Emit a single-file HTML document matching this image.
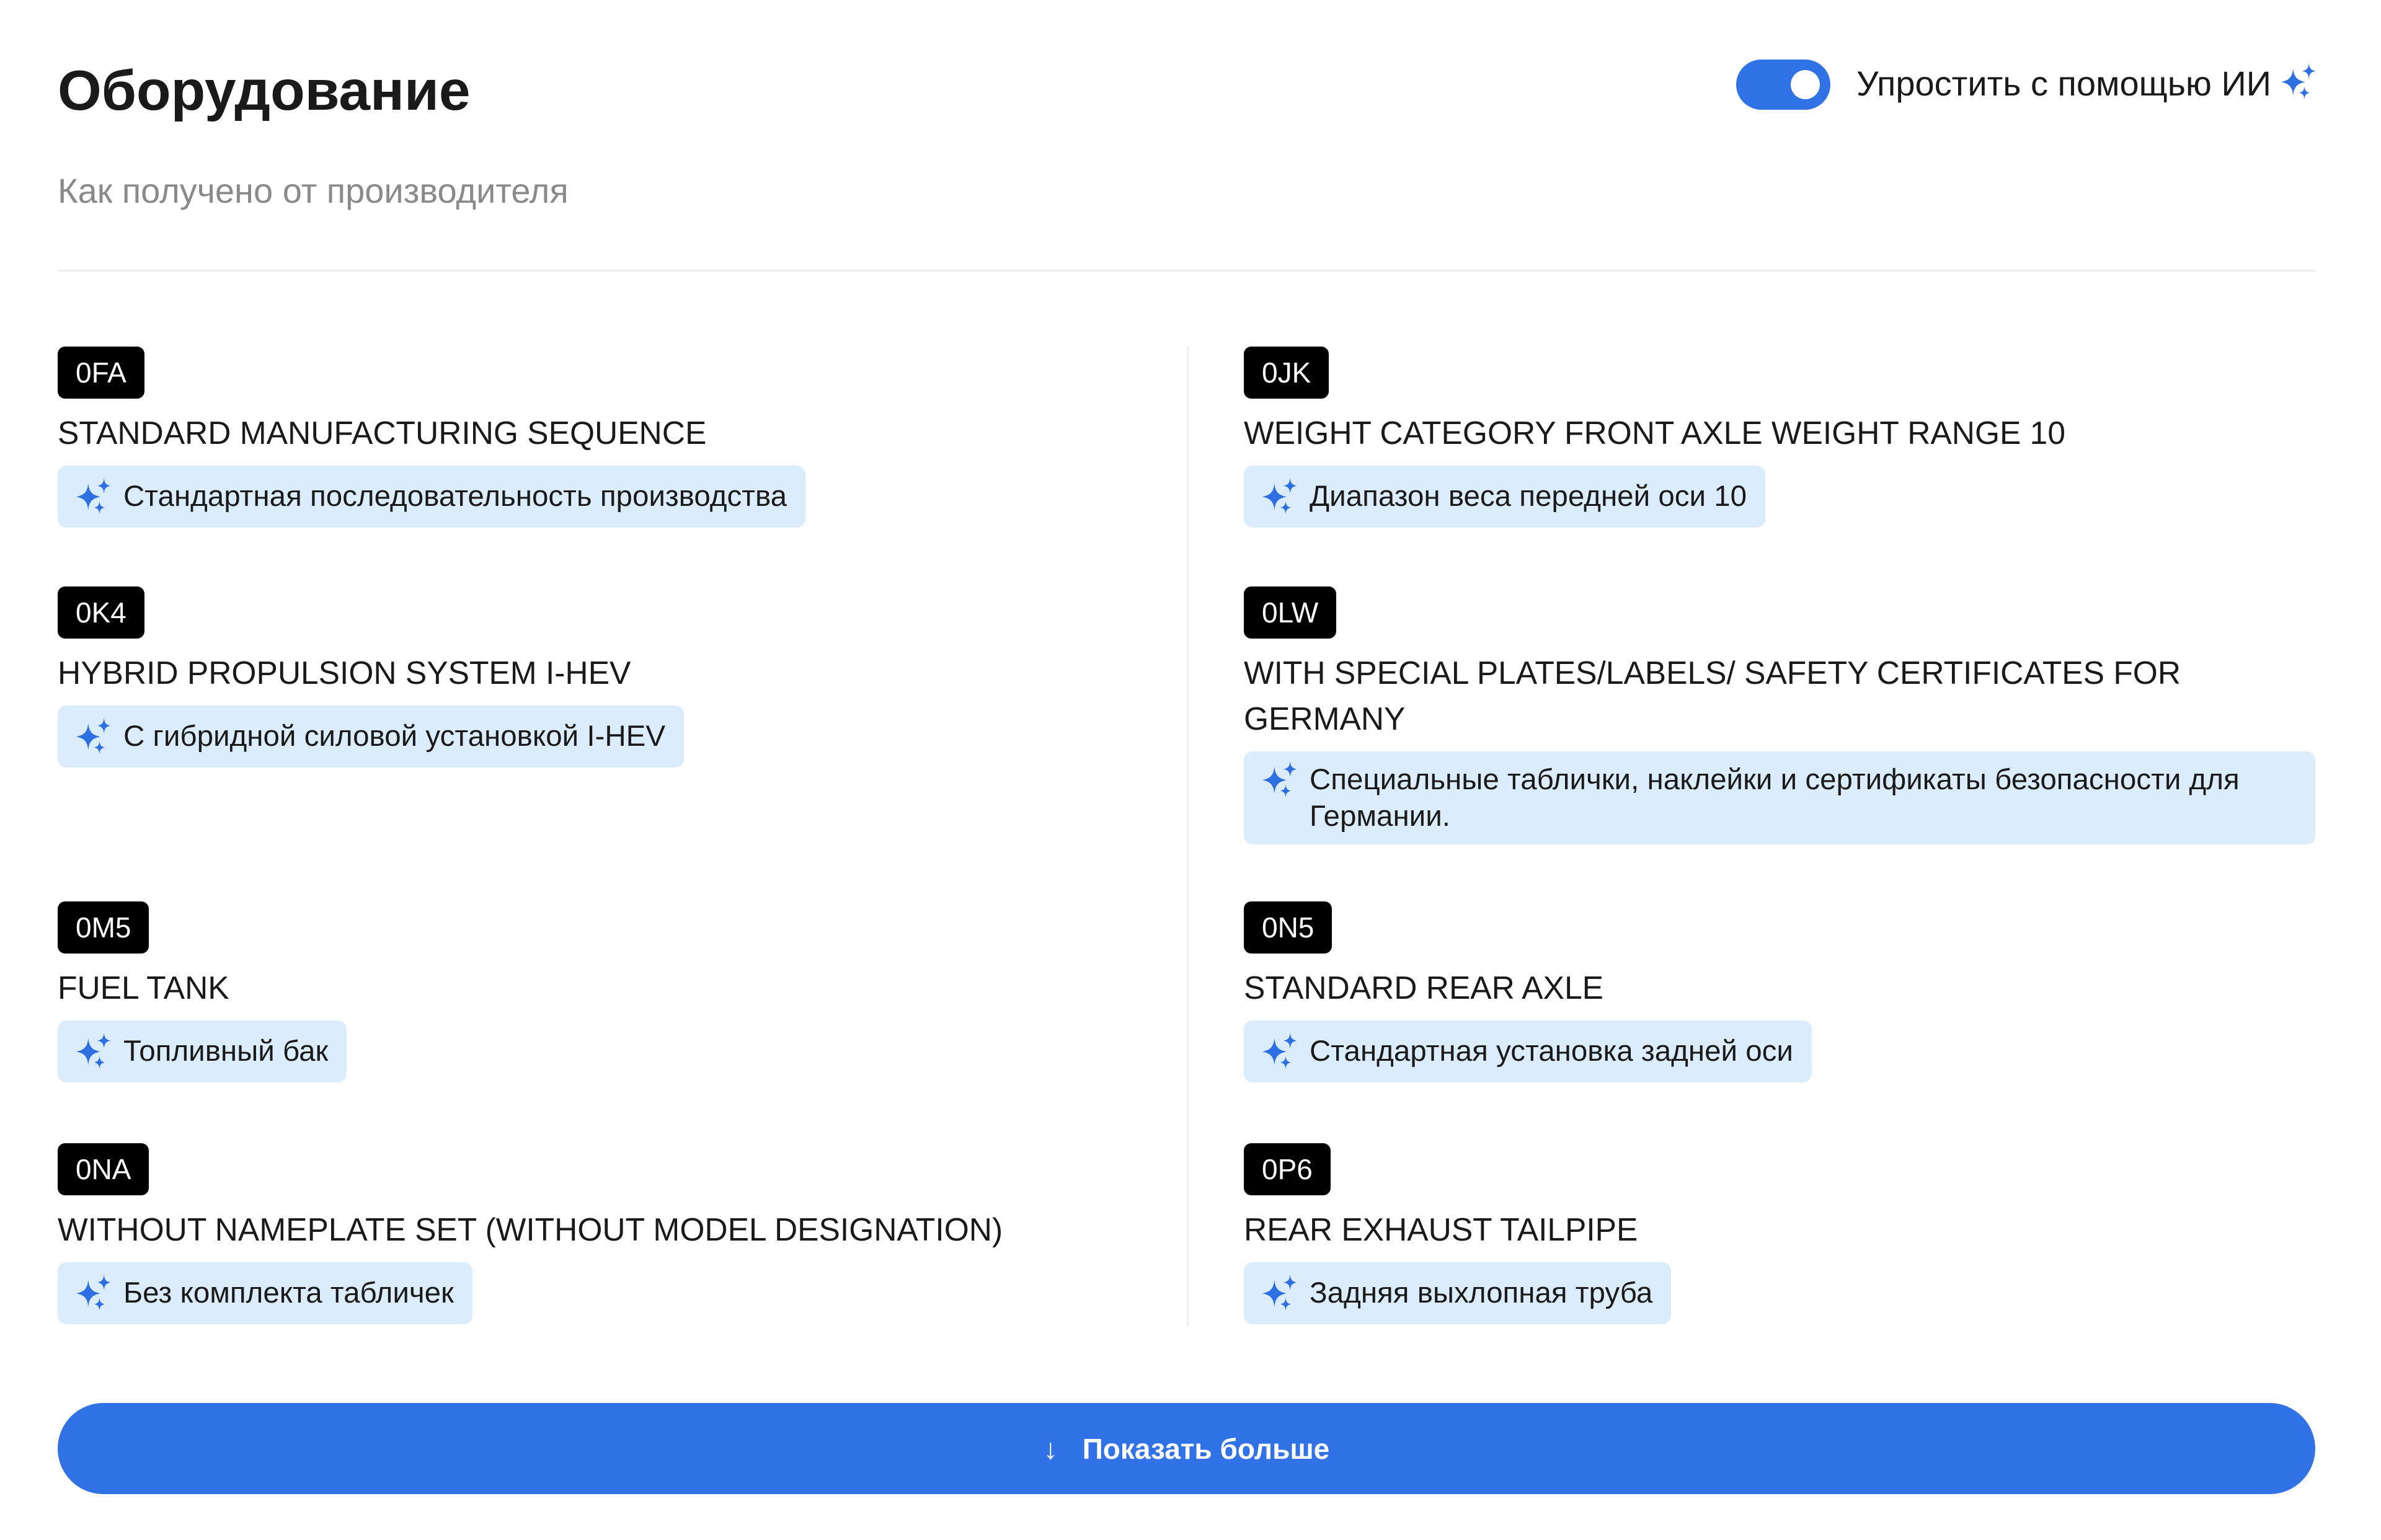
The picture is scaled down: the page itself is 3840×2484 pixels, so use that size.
<!DOCTYPE html>
<html><head><meta charset="utf-8">
<style>
*{margin:0;padding:0;box-sizing:border-box}
body{width:3840px;height:2484px;background:#fff;font-family:"Liberation Sans",sans-serif;color:#1a1a1a;position:relative;overflow:hidden}
.h1{position:absolute;left:93px;top:92px;font-size:91px;font-weight:bold;line-height:110px;color:#1a1a1a}
.sub{position:absolute;left:93px;top:277px;font-size:56px;line-height:62px;color:#8a8a8a}
.hr{position:absolute;left:93px;width:3641px;top:435px;height:3px;background:#efefef}
.tog{position:absolute;left:2800px;top:96px;width:152px;height:81px;border-radius:41px;background:#3173e6}
.tog:after{content:"";position:absolute;right:17px;top:17px;width:47px;height:47px;border-radius:50%;background:#fff}
.tl{position:absolute;left:2994px;top:102px;font-size:56px;line-height:66px;color:#1a1a1a;white-space:nowrap}
.vl{position:absolute;left:1914px;top:559px;width:3px;height:1580px;background:#efefef}
.item{position:absolute}
.badge{display:inline-block;height:84px;line-height:84px;padding:0 29px;background:#000;color:#fff;font-size:46px;border-radius:12px}
.t{margin-top:18px;font-size:51.5px;line-height:74px;color:#1a1a1a;text-transform:uppercase}
.chip{display:inline-flex;align-items:flex-start;margin-top:16px;background:#dbedfc;border-radius:14px;padding:20px 30px 21px 30px;font-size:47.5px;line-height:59px;color:#1a1a1a}
.chip svg{flex:none;width:58px;height:58px;margin-right:18px;margin-top:0}
.btn{position:absolute;left:93px;top:2263px;width:3641px;height:147px;border-radius:74px;background:#3173e6;color:#fff;font-size:46px;font-weight:bold;display:flex;align-items:center;justify-content:center}
</style></head><body>
<svg width="0" height="0" style="position:absolute"><defs>
<symbol id="sp" viewBox="0 0 24 24"><g fill="#2f6fe4">
<path d="M8 3.5C8.6 9 10.3 11.3 16 12.5C10.3 13.7 8.6 16 8 21.5C7.4 16 5.7 13.7 0 12.5C5.7 11.3 7.4 9 8 3.5Z"/>
<path d="M18.5 0C18.9 3.4 19.8 4.6 23 5.2C19.8 5.8 18.9 7 18.5 10.4C18.1 7 17.2 5.8 14 5.2C17.2 4.6 18.1 3.4 18.5 0Z"/>
<path d="M15.5 15.5C15.8 18.1 16.5 19.1 19 19.7C16.5 20.3 15.8 21.3 15.5 24C15.2 21.3 14.5 20.3 12 19.7C14.5 19.1 15.2 18.1 15.5 15.5Z"/>
</g></symbol></defs></svg>

<div class="h1">Оборудование</div>
<div class="sub">Как получено от производителя</div>
<div class="tog"></div>
<div class="tl">Упростить с помощью ИИ <svg style="width:58px;height:58px;vertical-align:-6px"><use href="#sp"/></svg></div>
<div class="hr"></div>
<div class="vl"></div>

<div class="item" style="left:93px;top:559px"><span class="badge">0FA</span><div class="t">Standard manufacturing sequence</div><div class="chip"><svg><use href="#sp"/></svg>Стандартная последовательность производства</div></div>
<div class="item" style="left:93px;top:946px"><span class="badge">0K4</span><div class="t">Hybrid propulsion system i-HEV</div><div class="chip"><svg><use href="#sp"/></svg>С гибридной силовой установкой I-HEV</div></div>
<div class="item" style="left:93px;top:1454px"><span class="badge">0M5</span><div class="t">Fuel tank</div><div class="chip"><svg><use href="#sp"/></svg>Топливный бак</div></div>
<div class="item" style="left:93px;top:1844px"><span class="badge">0NA</span><div class="t">Without nameplate set (without model designation)</div><div class="chip"><svg><use href="#sp"/></svg>Без комплекта табличек</div></div>

<div class="item" style="left:2006px;top:559px"><span class="badge">0JK</span><div class="t">Weight category front axle weight range 10</div><div class="chip"><svg><use href="#sp"/></svg>Диапазон веса передней оси 10</div></div>
<div class="item" style="left:2006px;top:946px;width:1728px"><span class="badge">0LW</span><div class="t">With special plates/labels/ safety certificates for Germany</div><div class="chip" style="display:flex;width:1728px;padding-top:16px;padding-bottom:16px"><svg><use href="#sp"/></svg><span>Специальные таблички, наклейки и сертификаты безопасности для Германии.</span></div></div>
<div class="item" style="left:2006px;top:1454px"><span class="badge">0N5</span><div class="t">Standard rear axle</div><div class="chip"><svg><use href="#sp"/></svg>Стандартная установка задней оси</div></div>
<div class="item" style="left:2006px;top:1844px"><span class="badge">0P6</span><div class="t">Rear exhaust tailpipe</div><div class="chip"><svg><use href="#sp"/></svg>Задняя выхлопная труба</div></div>

<div class="btn"><span style="font-weight:normal;margin-right:40px">↓</span>Показать больше</div>
</body></html>
